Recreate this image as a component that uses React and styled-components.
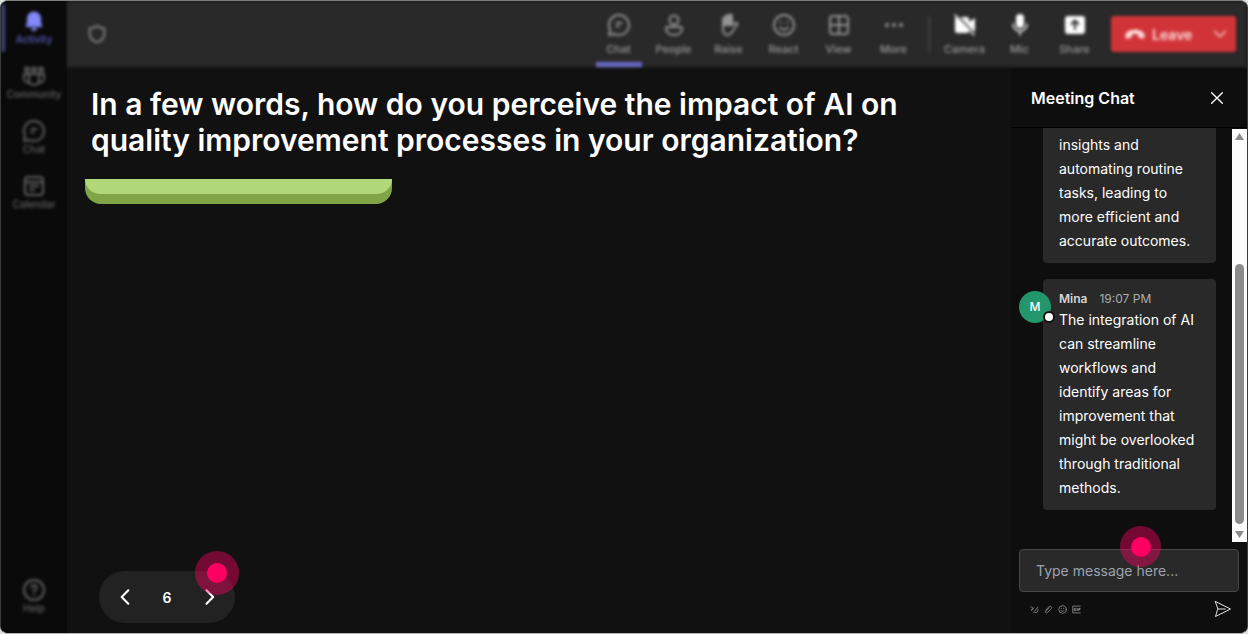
import React, { useState } from "react";
import styled, { createGlobalStyle, css } from "styled-components";

const GlobalStyle = createGlobalStyle`
  *,
  *::before,
  *::after {
    box-sizing: border-box;
  }
  body {
    margin: 0;
    background-color: #dfe1df;
    font-family: Inter, "Liberation Sans", sans-serif;
  }
  button {
    background: none;
    border: none;
    color: inherit;
    cursor: pointer;
    font-family: inherit;
    padding: 0;
  }
`;

// The navigation and the toolbar stay out of focus behind the meeting.
const outOfFocus = css`
  filter: blur(1px) blur(1px);
`;

const Window = styled.div`
  display: flex;
  height: 100vh;
  overflow: hidden;
  background-color: #111111;
  border: 1px solid #3a3c3b;
  border-top-color: #7d807e;
  border-bottom-color: #b5b5b5;
  border-radius: 8px;
  color: #ffffff;
`;
const Sidebar = styled.nav`
  display: flex;
  flex-direction: column;
  flex: 0 0 66px;
  gap: 17px;
  padding: 8px 0 17px;
  background-color: #0a0a0a;
`;
const SideItem = styled.button`
  position: relative;
  display: flex;
  flex-direction: column;
  align-items: center;
  width: 100%;
  padding-bottom: 1px;
  color: ${({ $active }) => ($active ? "#5b5fc7" : "#626262")};
  font-size: 10px;
  font-weight: 500;
  line-height: 13px;
  ${outOfFocus}

  svg {
    color: ${({ $active }) => ($active ? "#8388fa" : "inherit")};
  }
  &:last-child {
    margin-top: auto;
  }
  ${({ $active }) =>
    $active &&
    css`
      &::before {
        content: "";
        position: absolute;
        left: 0;
        top: -5px;
        width: 4px;
        height: 48px;
        background-color: #3f407e;
      }
    `}
`;
const Main = styled.div`
  display: flex;
  flex-direction: column;
  flex: 1;
  min-width: 0;
`;
const Toolbar = styled.header`
  position: relative;
  display: flex;
  align-items: center;
  flex: 0 0 66px;
  padding: 0 11px 0 19px;
  z-index: 0;

  &::before {
    content: "";
    position: absolute;
    inset: 0;
    z-index: -1;
    background-color: #292929;
    ${outOfFocus}
  }
`;
const Shield = styled.span`
  display: flex;
  margin-right: auto;
  color: #868686;
  ${outOfFocus}
`;
const Tool = styled.button`
  display: flex;
  flex-direction: column;
  align-items: center;
  gap: 5px;
  width: 55px;
  height: 66px;
  padding-top: 12px;
  color: ${({ $bright }) => ($bright ? "#ffffff" : "#949494")};
  font-size: 11px;
  font-weight: 500;
  line-height: 15px;
  ${outOfFocus}

  span {
    color: #9a9a9a;
  }
  &::after {
    content: "";
    flex-shrink: 0;
    width: 46px;
    height: 5px;
    background-color: ${({ $active }) => ($active ? "#676bc8" : "transparent")};
  }
`;
const Divider = styled.span`
  width: 1px;
  height: 36px;
  margin: 0 7px 0 8px;
  background-color: #5c5c5c;
  ${outOfFocus}
`;
const Leave = styled.div`
  display: flex;
  align-items: center;
  justify-content: space-between;
  width: 125px;
  height: 36px;
  margin-left: 9px;
  padding: 0 8px 0 13px;
  background-color: #d13438;
  border-radius: 3px;
  color: #ffdcdc;
  ${outOfFocus}
`;
const LeaveButton = styled.button`
  display: flex;
  align-items: center;
  gap: 6px;
  font-size: 14px;
  font-weight: 600;
`;
const LeaveMenu = styled.button`
  display: flex;
`;
const Content = styled.div`
  display: flex;
  flex: 1;
  min-height: 0;
`;
const Stage = styled.main`
  display: flex;
  flex-direction: column;
  align-items: flex-start;
  flex: 1;
  min-width: 0;
  padding: 19px 18px 10px;
`;
const Question = styled.h1`
  max-width: 840px;
  margin: 0 6px 21px;
  font-size: 30px;
  font-weight: 600;
  line-height: 36px;
`;
const Bar = styled.div`
  width: 307px;
  height: 25px;
  background-color: #80a546;
  border-radius: 0 0 16px 16px;

  &::before {
    content: "";
    display: block;
    height: 15px;
    background-color: #b0d879;
    border-radius: 0 0 16px 16px;
  }
`;
const Pager = styled.div`
  position: relative;
  display: flex;
  align-items: center;
  justify-content: space-between;
  width: 136px;
  height: 52px;
  margin: auto 14px 0;
  padding: 0 16px;
  background-color: #222222;
  border-radius: 26px;
  font-size: 14px;
  font-weight: 600;

  button {
    display: flex;
  }
`;
const Hotspot = styled.span`
  position: absolute;
  display: flex;
  align-items: center;
  justify-content: center;
  width: ${({ $size }) => $size}px;
  height: ${({ $size }) => $size}px;
  background-color: rgba(255, 0, 100, 0.42);
  border-radius: 50%;
  pointer-events: none;

  &::before {
    content: "";
    width: 20px;
    height: 20px;
    background-color: #ff0062;
    border-radius: 50%;
  }
`;
const PagerHotspot = styled(Hotspot)`
  top: -20px;
  right: -4px;
`;
const ComposerHotspot = styled(Hotspot)`
  top: -16px;
  left: calc(50% - 9px);
`;
const Chat = styled.aside`
  display: flex;
  flex-direction: column;
  flex: 0 0 236px;
  background-color: #0e0e0e;
`;
const ChatHeader = styled.div`
  display: flex;
  align-items: center;
  justify-content: space-between;
  flex: 0 0 61px;
  padding: 2px 22px 0 20px;
  border-bottom: 1px solid #000000;

  button {
    display: flex;
  }
`;
const ChatTitle = styled.h2`
  margin: 0;
  font-size: 16px;
  font-weight: 600;
`;
const Feed = styled.div`
  display: flex;
  flex: 1;
  min-height: 0;
`;
const Messages = styled.div`
  display: flex;
  flex-direction: column;
  justify-content: flex-end;
  flex: 1;
  gap: 16px;
  overflow: hidden;
  padding: 0 16px 32px 32px;
`;
const Bubble = styled.article`
  position: relative;
  flex-shrink: 0;
  padding: 11px 16px 10px;
  background-color: #292929;
  border-radius: 4px;
  font-size: 14px;
  line-height: 24px;

  p {
    margin: 0;
  }
`;
const Meta = styled.div`
  display: flex;
  gap: 12px;
  color: #adadad;
  font-size: 12px;
  line-height: 18px;

  strong {
    color: #d6d6d6;
    font-weight: 600;
  }
`;
const Avatar = styled.span`
  position: absolute;
  top: 12px;
  left: -24px;
  display: flex;
  align-items: center;
  justify-content: center;
  width: 32px;
  height: 32px;
  background-color: #23966b;
  border-radius: 50%;
  font-size: 12px;
  font-weight: 500;

  &::after {
    content: "";
    position: absolute;
    right: -4px;
    bottom: 0;
    width: 12px;
    height: 12px;
    background-color: #ffffff;
    border: 2px solid #111111;
    border-radius: 50%;
  }
`;
const Scrollbar = styled.div`
  display: flex;
  flex-direction: column;
  align-items: center;
  flex: 0 0 15px;
  margin-top: 1px;
  padding: 4px 0;
  background-color: #fcfcfc;
`;
const Thumb = styled.span`
  width: 9px;
  height: 260px;
  margin: auto 0 6px;
  background-color: #8b8b8b;
  border-radius: 5px;
`;
const Composer = styled.form`
  position: relative;
  padding: 7px 8px 15px;
`;
const MessageInput = styled.input`
  display: block;
  width: 100%;
  height: 43px;
  padding: 0 16px;
  background-color: #292929;
  border: 1px solid #484848;
  border-radius: 4px;
  color: #ffffff;
  font-family: inherit;
  font-size: 14px;
  outline: none;

  &::placeholder {
    color: #9ca3af;
    opacity: 1;
  }
`;
const Actions = styled.div`
  display: flex;
  align-items: center;
  gap: 5px;
  margin-top: 8px;
  padding: 0 7px 0 11px;
  color: #9c9c9c;

  button {
    display: flex;
  }
  button:last-child {
    margin-left: auto;
    color: #e8e8e8;
  }
`;

const Icon = ({ size = 24, stroke = 2, children }) => (
  <svg
    width={size}
    height={size}
    viewBox="0 0 24 24"
    fill="none"
    stroke="currentColor"
    strokeWidth={stroke}
    strokeLinecap="round"
    strokeLinejoin="round"
    aria-hidden="true"
  >
    {children}
  </svg>
);

const icons = {
  bell: (
    <path
      d="M12 2.5a7 7 0 0 0-7 7v4.2L3.4 18h17.2L19 13.7V9.5a7 7 0 0 0-7-7ZM9 19h6a3 3 0 0 1-6 0Z"
      fill="currentColor"
      stroke="none"
    />
  ),
  community: (
    <>
      <circle cx="12" cy="5.5" r="2" />
      <circle cx="5" cy="5.5" r="2" />
      <circle cx="19" cy="5.5" r="2" />
      <path d="M7 10h10v6a5 5 0 0 1-10 0ZM6.5 10H2v4a5 5 0 0 0 5 5M17.5 10H22v4a5 5 0 0 1-5 5" />
    </>
  ),
  chat: (
    <>
      <path d="M12 2a10 10 0 1 1-4.6 18.9L2 22l1.1-5.4A10 10 0 0 1 12 2Z" />
      <path d="M9.5 10h5M9.5 13.5h2" />
    </>
  ),
  calendar: (
    <>
      <rect x="3" y="3" width="18" height="18" rx="3" />
      <path d="M3 8h18M8 12h8M8 16h4" />
    </>
  ),
  help: (
    <>
      <circle cx="12" cy="12" r="10" />
      <path d="M9.5 9.5a2.5 2.5 0 1 1 4 2c-1 .8-1.5 1.2-1.5 2.5M12 17v.1" />
    </>
  ),
  shield: (
    <path d="M12 3c2.5 2 5 2.7 8 3v6c0 5-3.5 7.5-8 9-4.5-1.5-8-4-8-9V6c3-.3 5.5-1 8-3Z" />
  ),
  people: (
    <>
      <circle cx="12" cy="7" r="4.5" />
      <path d="M5.5 14h13a1.5 1.5 0 0 1 1.5 1.5c0 4-3.5 6.5-8 6.5s-8-2.5-8-6.5A1.5 1.5 0 0 1 5.5 14Z" />
    </>
  ),
  raise: (
    <>
      <path
        d="M6 12V6a1.5 1.5 0 0 1 3 0V3.5a1.5 1.5 0 0 1 3 0V3a1.5 1.5 0 0 1 3 0v9Z"
        fill="currentColor"
      />
      <path d="M6 12v4c0 3 1.5 6 5 6 2.5 0 3.5-2 5-4.5l4-5.5c1-1 0-2.5-1.5-2L15 12" />
    </>
  ),
  react: (
    <>
      <circle cx="12" cy="12" r="10" />
      <path d="M8 14.5c2 3 6 3 8 0M8.7 9v.5M15.3 9v.5" />
    </>
  ),
  view: (
    <>
      <rect x="3" y="3" width="18" height="18" rx="3" />
      <path d="M12 3v18M3 12h18" />
    </>
  ),
  more: (
    <g fill="currentColor" stroke="none">
      <circle cx="5" cy="12" r="2" />
      <circle cx="12" cy="12" r="2" />
      <circle cx="19" cy="12" r="2" />
    </g>
  ),
  camera: (
    <>
      <path
        d="M5 4h9a2 2 0 0 1 2 2v3l6-4v14l-6-4v3a2 2 0 0 1-2 2H4a2 2 0 0 1-2-2V5Z"
        fill="currentColor"
        stroke="none"
      />
      <path d="M4 2l18 20" stroke="#292929" />
      <path d="M2 2l19 20" strokeWidth="1.5" />
    </>
  ),
  mic: (
    <>
      <rect x="8" y="1" width="8" height="14" rx="4" fill="currentColor" stroke="none" />
      <path d="M5 11a7 7 0 0 0 14 0M12 18v4" strokeWidth="1.5" />
    </>
  ),
  share: (
    <>
      <rect x="2" y="3" width="20" height="18" rx="3" fill="currentColor" stroke="none" />
      <path d="M12 16V8M8.5 11 12 7.5l3.5 3.5" stroke="#292929" />
    </>
  ),
  phone: (
    <path
      d="M1.5 14c0-4 5-7 10.5-7s10.5 3 10.5 7c0 2.5-1 3.2-2.5 3l-3-.7c-1-.3-1.500-1-1.500-2v-1.8c-2-.7-5-.7-7 0v1.8c0 1-.5 1.7-1.5 2L4 17c-1.5.2-2.5-.5-2.5-3Z"
      fill="currentColor"
      stroke="none"
    />
  ),
  down: <path d="m4 8 8 8 8-8" />,
  left: <path d="m16 4-8 8 8 8" />,
  right: <path d="m9 4 8 8-8 8" />,
  close: <path d="M4 4l16 16M20 4 4 20" />,
  format: <path d="M2 6c3-4 7 0 4 4s-3 6 0 3l4-5M9 20l12-14M13 20c6 2 8-3 8-8" />,
  clip: <path d="m4 14 9-9c4-4 10 1 6 5L9 20c-3 3-7-1-4-4l9-9" />,
  gif: (
    <>
      <path d="M22 3H2v18h20" />
      <path d="M10 9H6v6h4v-3M14 9v6M22 9h-4v6M18 12h3" />
    </>
  ),
  send: <path d="M2 2l20 10L2 22l3-10ZM5 12h10" />,
};

const sideItems = [
  { name: "Activity", icon: "bell", active: true },
  { name: "Community", icon: "community" },
  { name: "Chat", icon: "chat" },
  { name: "Calendar", icon: "calendar" },
  { name: "Help", icon: "help" },
];
const tools = [
  { name: "Chat", icon: "chat", active: true },
  { name: "People", icon: "people" },
  { name: "Raise", icon: "raise" },
  { name: "React", icon: "react" },
  { name: "View", icon: "view" },
  { name: "More", icon: "more" },
];
const devices = [
  { name: "Camera", icon: "camera" },
  { name: "Mic", icon: "mic" },
  { name: "Share", icon: "share" },
];

const App = () => {
  const [page, setPage] = useState(6);
  const [message, setMessage] = useState("");

  // Nothing is stored yet, just clear the box.
  const handleSend = (e) => {
    e.preventDefault();
    setMessage("");
  };

  return (
    <>
      <GlobalStyle />
      <Window>
        <Sidebar>
          {sideItems.map((item) => (
            <SideItem key={item.name} $active={item.active}>
              <Icon>{icons[item.icon]}</Icon>
              {item.name}
            </SideItem>
          ))}
        </Sidebar>
        <Main>
          <Toolbar>
            <Shield>
              <Icon size={22}>{icons.shield}</Icon>
            </Shield>
            {tools.map((tool) => (
              <Tool key={tool.name} $active={tool.active}>
                <Icon>{icons[tool.icon]}</Icon>
                <span>{tool.name}</span>
              </Tool>
            ))}
            <Divider />
            {devices.map((tool) => (
              <Tool key={tool.name} $bright>
                <Icon>{icons[tool.icon]}</Icon>
                <span>{tool.name}</span>
              </Tool>
            ))}
            <Leave>
              <LeaveButton>
                <Icon size={22}>{icons.phone}</Icon>
                Leave
              </LeaveButton>
              <LeaveMenu aria-label="Leave options">
                <Icon size={16}>{icons.down}</Icon>
              </LeaveMenu>
            </Leave>
          </Toolbar>
          <Content>
            <Stage>
              <Question>
                In a few words, how do you perceive the impact of AI on quality
                improvement processes in your organization?
              </Question>
              <Bar />
              <Pager>
                <button aria-label="Previous" onClick={() => setPage(page - 1)}>
                  <Icon size={20} stroke={2.5}>{icons.left}</Icon>
                </button>
                {page}
                <button aria-label="Next" onClick={() => setPage(page + 1)}>
                  <Icon size={20} stroke={2.5}>{icons.right}</Icon>
                </button>
                <PagerHotspot $size={44} />
              </Pager>
            </Stage>
            <Chat>
              <ChatHeader>
                <ChatTitle>Meeting Chat</ChatTitle>
                <button aria-label="Close chat">
                  <Icon size={16}>{icons.close}</Icon>
                </button>
              </ChatHeader>
              <Feed>
                <Messages>
                  <Bubble>
                    <p>
                      insights and automating routine tasks, leading to more
                      efficient and accurate outcomes.
                    </p>
                  </Bubble>
                  <Bubble>
                    <Avatar>M</Avatar>
                    <Meta>
                      <strong>Mina</strong>
                      <span>19:07 PM</span>
                    </Meta>
                    <p>
                      The integration of AI can streamline workflows and
                      identify areas for improvement that might be overlooked
                      through traditional methods.
                    </p>
                  </Bubble>
                </Messages>
                <Scrollbar>
                  <svg width="9" height="8" viewBox="0 0 9 8" fill="#8b8b8b">
                    <path d="M4.5 0 9 7H0Z" />
                  </svg>
                  <Thumb />
                  <svg width="9" height="8" viewBox="0 0 9 8" fill="#8b8b8b">
                    <path d="M4.5 8 9 1H0Z" />
                  </svg>
                </Scrollbar>
              </Feed>
              <Composer onSubmit={handleSend}>
                <MessageInput
                  aria-label="Message"
                  placeholder="Type message here..."
                  value={message}
                  onChange={(e) => setMessage(e.target.value)}
                />
                <Actions>
                  <button type="button" aria-label="Format">
                    <Icon size={9}>{icons.format}</Icon>
                  </button>
                  <button type="button" aria-label="Attach">
                    <Icon size={9}>{icons.clip}</Icon>
                  </button>
                  <button type="button" aria-label="Emoji">
                    <Icon size={9}>{icons.react}</Icon>
                  </button>
                  <button type="button" aria-label="GIF">
                    <Icon size={9}>{icons.gif}</Icon>
                  </button>
                  <button type="submit" aria-label="Send">
                    <Icon size={18} stroke={1.3}>{icons.send}</Icon>
                  </button>
                </Actions>
                <ComposerHotspot $size={41} />
              </Composer>
            </Chat>
          </Content>
        </Main>
      </Window>
    </>
  );
};

export default App;
